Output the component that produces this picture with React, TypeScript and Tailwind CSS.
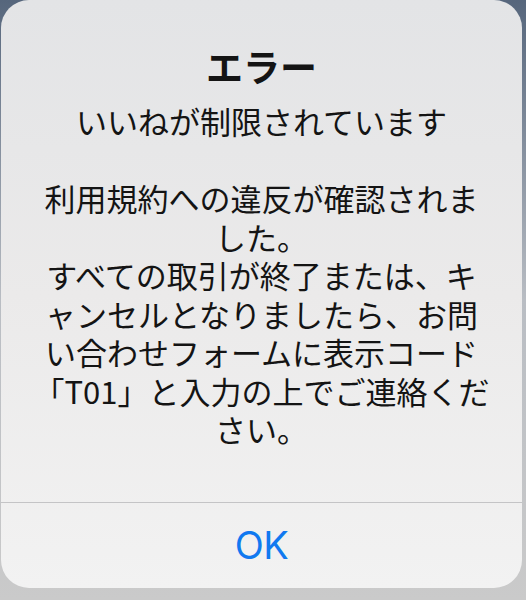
export default function App() {
  const body = [
    'いいねが制限されています',
    '\u00a0',
    '利用規約への違反が確認されま',
    'した。',
    'すべての取引が終了または、キ',
    'ャンセルとなりましたら、お問',
    'い合わせフォームに表示コード',
    '「T01」と入力の上でご連絡くだ',
    'さい。',
  ];

  return (
    <div className="w-[526px] h-[600px] overflow-hidden bg-gradient-to-b from-[#56667c] via-[#b9bdc3] to-[#cacaca]">
      <div
        className="ml-[1px] w-[521px] h-[588px] rounded-[28px] bg-gradient-to-b from-[#e3e4e6] via-[#ebeaea] to-[#f2f2f2] flex flex-col text-[#141414]"
        style={{ fontFamily: '"Noto Sans CJK JP", "Noto Sans", sans-serif' }}
      >
        <div className="flex-1 flex flex-col items-center pt-[44px]">
          <h1 className="text-[37px] leading-[44px] font-bold">エラー</h1>
          <div className="mt-[14px] text-[31px] leading-[38.5px] text-center">
            {body.map((line, i) => (
              <div key={i}>{line}</div>
            ))}
          </div>
        </div>
        <div className="h-[86px] border-t border-[#c4c4c6] flex items-center justify-center">
          <span
            className="text-[38px] text-[#1079f0] tracking-[-0.5px]"
            style={{ fontFamily: 'Inter, "Noto Sans", sans-serif' }}
          >
            OK
          </span>
        </div>
      </div>
    </div>
  );
}
